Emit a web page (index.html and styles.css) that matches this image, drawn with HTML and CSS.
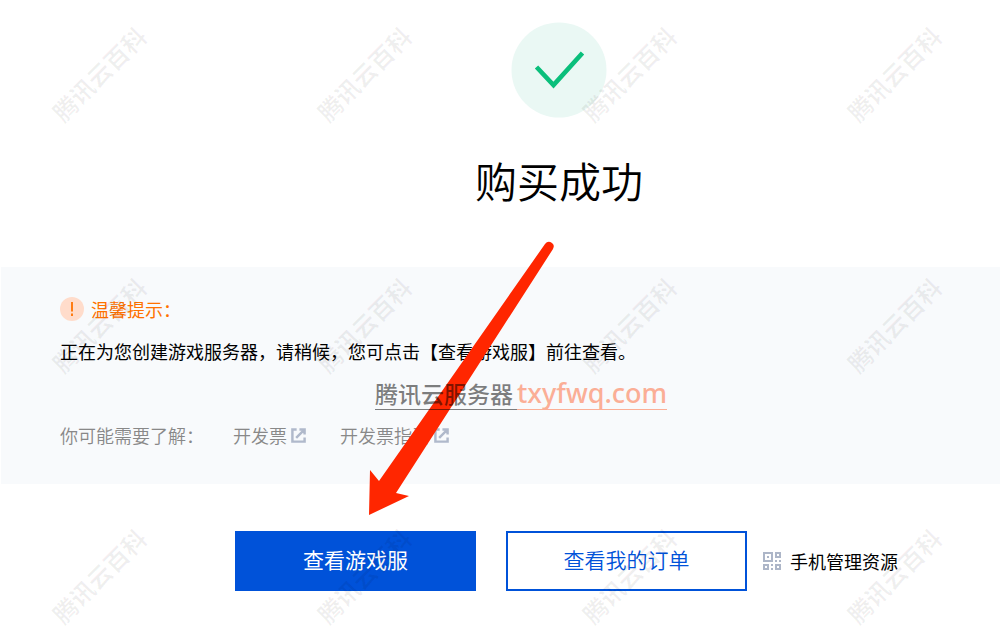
FILE: index.html
```html
<!DOCTYPE html>
<html lang="zh-CN">
<head>
    <meta charset="UTF-8">
    <meta name="viewport" content="width=device-width, initial-scale=1.0">
    <title>购买成功</title>
    <link rel="stylesheet" href="styles.css">
</head>
<body>
    <main class="page">
      <header class="result">
        <svg class="result-icon" viewBox="0 0 96 96" aria-hidden="true">
          <circle cx="48" cy="48" r="47.500" fill="#eaf8f4"/>
          <path d="M25.500 45 L42.500 63 L71.500 31" fill="none" stroke="#0abf7b" stroke-width="4.600"/>
        </svg>
        <h1>购买成功</h1>
      </header>

      <section class="notice">
        <h2 class="notice-title">
          <svg class="notice-icon" viewBox="0 0 24 24" aria-hidden="true">
            <circle cx="12" cy="12" r="12" fill="#ffdccb"/>
            <path d="M12 5 V14.500 M12 16.500 V19" stroke="#ff7200" stroke-width="1.800"/>
          </svg>
          温馨提示：
        </h2>
        <p class="notice-text">正在为您创建游戏服务器，请稍候，您可点击【查看游戏服】前往查看。</p>
        <a class="site-link" href="#"><span class="site-name">腾讯云服务器</span> <span class="site-domain">txyfwq.com</span></a>
        <div class="related">
          <span class="related-label">你可能需要了解：</span>
          <a href="#">开发票
            <svg class="link-icon" viewBox="0 0 16 16" aria-hidden="true">
              <path d="M6 1.500 H1.500 V14.500 H14.500 V10 M5.500 10.500 L13.500 2.500 M9 1.500 H14.500 V7" fill="none" stroke="#b0b9cb" stroke-width="2.600"/>
            </svg>
          </a>
          <a href="#">开发票指引
            <svg class="link-icon" viewBox="0 0 16 16" aria-hidden="true">
              <path d="M6 1.500 H1.500 V14.500 H14.500 V10 M5.500 10.500 L13.500 2.500 M9 1.500 H14.500 V7" fill="none" stroke="#b0b9cb" stroke-width="2.600"/>
            </svg>
          </a>
        </div>
      </section>

      <div class="actions">
        <button type="button" class="btn btn-primary">查看游戏服</button>
        <button type="button" class="btn">查看我的订单</button>
        <a class="mobile" href="#">
          <svg class="qr-icon" viewBox="0 0 18 18" aria-hidden="true">
            <path d="M1 1 H9 V9 H1 Z M13 1 H17 V5 H13 Z M1 13 H5 V17 H1 Z M13 13 H17 V17 H13 Z" fill="none" stroke="#adb6c8" stroke-width="2"/>
            <path d="M4 4 h2 v2 h-2 Z M12 8 h2 v2 h-2 Z M16 8 h2 v2 h-2 Z M8 12 h2 v2 h-2 Z M8 16 h2 v2 h-2 Z" fill="#adb6c8"/>
          </svg>
          手机管理资源
        </a>
      </div>

      <!-- arrow pointing at the primary button -->
      <svg class="arrow" viewBox="0 0 186 275" aria-hidden="true">
        <path d="M177 3 Q180 -1 184 2 Q187 4 185 8 L28 252 L41 255 L1 274 L2 229 L11 240 Z" fill="#ff2600"/>
      </svg>

      <div class="watermarks" aria-hidden="true">
        <span>腾讯云百科</span><span>腾讯云百科</span><span>腾讯云百科</span><span>腾讯云百科</span>
        <span>腾讯云百科</span><span>腾讯云百科</span><span>腾讯云百科</span><span>腾讯云百科</span>
        <span>腾讯云百科</span><span>腾讯云百科</span><span>腾讯云百科</span><span>腾讯云百科</span>
      </div>
    </main>
</body>
</html>
```
FILE: styles.css
```css
* {
    box-sizing: border-box;
}

body {
    margin: 0;
    background-color: #fff;
    color: #000;
    font-family: "Noto Sans CJK SC", sans-serif;
    font-size: 18px;
    line-height: 24px;
}

a {
    color: inherit;
    text-decoration: none;
}

.page {
    position: relative;
    min-height: 100vh;
    overflow: hidden;
}

.result {
    display: flex;
    flex-direction: column;
    align-items: center;
    gap: 32px;
    padding: 22px 0 57px 118px;
}

.result-icon {
    width: 96px;
    height: 96px;
}

.result h1 {
    margin: 0;
    font-size: 42px;
    font-weight: 350;
    line-height: 60px;
}

.notice {
    display: flex;
    flex-direction: column;
    align-items: flex-start;
    margin-left: 1px;
    padding: 30px 59px 37px;
    background-color: #f8fafc;
}

.notice-title {
    display: flex;
    align-items: center;
    gap: 7px;
    margin: 0;
    color: #ff7200;
    font-size: 18px;
    font-weight: 400;
}

.notice-icon {
    width: 24px;
    height: 24px;
}

.notice-text {
    margin: 18px 0 14px;
}

.site-link {
    position: relative;
    z-index: 2; /* stays above the arrow */
    display: flex;
    margin-left: 315px;
    line-height: 32px;
}

.site-name {
    padding-right: 4px;
    border-bottom: 1px solid rgba(0, 0, 0, 0.5);
    color: rgba(0, 0, 0, 0.5);
    font-size: 23px;
    font-weight: 500;
}

.site-domain {
    border-bottom: 1px solid #fbae96;
    color: #fbae96;
    font-family: "Noto Sans", sans-serif;
    font-size: 27px;
    font-weight: 500;
}

.related {
    display: flex;
    margin-top: 13px;
    color: #888;
    font-weight: 350;
}

.related-label {
    margin-right: 29px;
}

.related a {
    display: flex;
    align-items: center;
    gap: 4px;
    margin-right: 34px;
}

.link-icon {
    width: 15px;
    height: 15px;
}

.actions {
    display: flex;
    align-items: center;
    gap: 30px;
    padding: 47px 40px 40px 235px;
}

.btn {
    width: 241px;
    height: 60px;
    padding: 0 0 4px;
    border: 2px solid #0052d9;
    background-color: #fff;
    color: #0052d9;
    font-family: inherit;
    font-size: 21px;
    font-weight: 350;
    cursor: pointer;
}

.btn-primary {
    background-color: #0052d9;
    color: #fff;
    font-weight: 400;
}

.mobile {
    display: flex;
    align-items: center;
    gap: 9px;
    margin-left: -14px;
}

.qr-icon {
    width: 18px;
    height: 18px;
}

.arrow {
    position: absolute;
    z-index: 1;
    top: 241px;
    left: 368px;
    width: 186px;
    height: 275px;
    pointer-events: none;
}

.watermarks {
    position: absolute;
    z-index: 1;
    top: 62px;
    left: 39px;
    display: grid;
    grid-template-columns: repeat(4, 120px);
    gap: 227px 145px;
    color: rgba(0, 0, 0, 0.06);
    font-size: 24px;
    font-weight: 700;
    pointer-events: none;
}

.watermarks span {
    transform: rotate(-45deg);
}
```
